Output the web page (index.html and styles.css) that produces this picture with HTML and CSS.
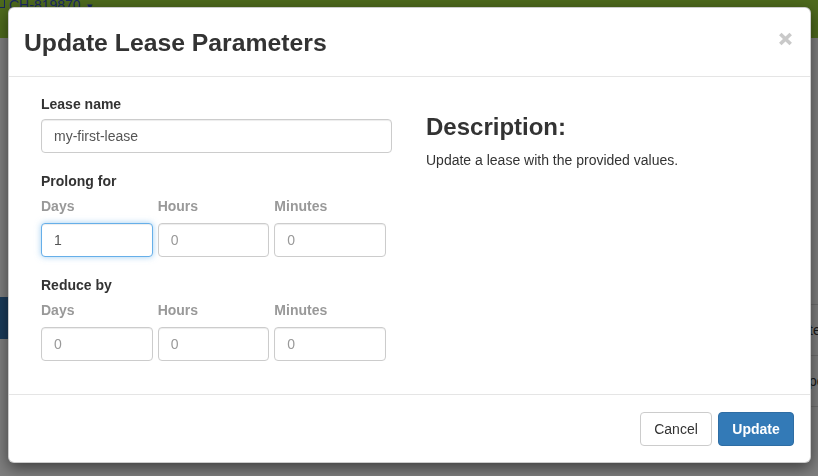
FILE: index.html
```html
<!DOCTYPE html>
<html lang="en">
<head>
<meta charset="utf-8">
<title>Update Lease Parameters</title>
<link rel="stylesheet" href="styles.css">
</head>
<body>
<div class="page">
  <nav class="topbar">
    <span class="brand-icon"></span>
    <span class="project">CH-819870 <span class="caret">&#9662;</span></span>
  </nav>
  <div class="main">
    <aside class="sidebar">
      <div class="side-item active"></div>
    </aside>
    <section class="content">
      <div class="toolbar">
        <button class="page-btn">Create Lease</button>
      </div>
      <div class="table">
        <div class="row"><div class="cell-wide"></div><div class="cell">test</div></div>
        <div class="row"><div class="cell-wide"></div><div class="cell">pending</div></div>
      </div>
    </section>
  </div>
</div>

<div class="backdrop"></div>

<div class="modal">
  <div class="modal-header">
    <h3 class="modal-title">Update Lease Parameters</h3>
    <button class="close" aria-label="Close">
      <svg width="15" height="14" viewBox="0 0 15 14"><path d="M2.3 2 L12.7 12 M12.7 2 L2.3 12" stroke="#c9c9c9" stroke-width="3.6" stroke-linecap="butt"/></svg>
    </button>
  </div>
  <div class="modal-body">
    <div class="form-col">
      <div class="form-group">
        <label class="label">Lease name</label>
        <input class="input" type="text" value="my-first-lease">
      </div>
      <div class="form-group">
        <label class="label">Prolong for</label>
        <div class="time-grid">
          <div class="time-field">
            <span class="sub-label">Days</span>
            <input class="input focused" type="text" value="1">
          </div>
          <div class="time-field">
            <span class="sub-label">Hours</span>
            <input class="input" type="text" placeholder="0">
          </div>
          <div class="time-field">
            <span class="sub-label">Minutes</span>
            <input class="input" type="text" placeholder="0">
          </div>
        </div>
      </div>
      <div class="form-group last">
        <label class="label">Reduce by</label>
        <div class="time-grid">
          <div class="time-field">
            <span class="sub-label">Days</span>
            <input class="input" type="text" placeholder="0">
          </div>
          <div class="time-field">
            <span class="sub-label">Hours</span>
            <input class="input" type="text" placeholder="0">
          </div>
          <div class="time-field">
            <span class="sub-label">Minutes</span>
            <input class="input" type="text" placeholder="0">
          </div>
        </div>
      </div>
    </div>
    <div class="desc-col">
      <h3 class="desc-title">Description:</h3>
      <p class="desc-text">Update a lease with the provided values.</p>
    </div>
  </div>
  <div class="modal-footer">
    <button class="btn btn-default">Cancel</button>
    <button class="btn btn-primary">Update</button>
  </div>
</div>
</body>
</html>
```
FILE: styles.css
```css
* { box-sizing: border-box; }

html, body {
  margin: 0;
  height: 100%;
  overflow: hidden;
}

body {
  font-family: "Liberation Sans", Arial, sans-serif;
  font-size: 14px;
  line-height: 20px;
  color: #333;
  background: #fff;
}

/* ---------- page underneath ---------- */
.page {
  width: 900px;
  height: 476px;
}

.topbar {
  height: 38px;
  background: #9cd43a;
  display: flex;
  align-items: flex-start;
  gap: 4px;
}

.brand-icon {
  width: 5px;
  height: 10px;
  margin-top: -2px;
  border: 1px solid #2f4fb4;
  border-left: none;
}

.project {
  color: #3552c4;
  font-size: 14px;
  line-height: 14px;
  margin-top: -2px;
}

.caret {
  font-size: 11px;
  margin-left: 2px;
}

.main {
  display: flex;
  height: 438px;
}

.sidebar {
  width: 180px;
  background: #fff;
  padding-top: 259px;
}

.side-item {
  height: 42px;
}

.side-item.active { background: #3777b5; }

.content {
  flex: 1;
  background: #fff;
}

.toolbar {
  display: flex;
  justify-content: flex-end;
  padding-top: 160px;
}

.page-btn {
  height: 34px;
  width: 100px;
  margin-right: -18px;
  border: 1px solid #2e6da4;
  background: #337ab7;
  color: #fff;
  font: inherit;
  text-align: left;
  padding-left: 8px;
  letter-spacing: 1.2px;
}

.table {
  margin-top: 72px;
  border-top: 1px solid #ddd;
}

.row {
  display: flex;
  height: 51px;
  border-bottom: 1px solid #ddd;
  align-items: center;
}

.cell-wide { width: 629px; }

.cell { color: #333; }

/* ---------- backdrop ---------- */
.backdrop {
  position: fixed;
  inset: 0;
  background: rgba(0, 0, 0, 0.5);
}

/* ---------- modal ---------- */
.modal {
  position: absolute;
  left: 8px;
  top: 7px;
  width: 803px;
  background: #fff;
  border: 1px solid rgba(0, 0, 0, 0.2);
  border-radius: 6px;
  box-shadow: 0 5px 15px rgba(0, 0, 0, 0.5);
}

.modal-header {
  display: flex;
  justify-content: space-between;
  align-items: flex-start;
  padding: 21px 17px 19px 15px;
  border-bottom: 1px solid #e5e5e5;
}

.modal-title {
  margin: 0;
  font-size: 24.75px;
  line-height: 28px;
  font-weight: bold;
  color: #333;
}

.close {
  border: 0;
  background: none;
  padding: 0;
  margin-top: 3px;
  line-height: 0;
  cursor: pointer;
}

.modal-body {
  display: grid;
  grid-template-columns: 351px 1fr;
  column-gap: 34px;
  padding: 17px 15px 33px 32px;
}

.form-group { margin-bottom: 18px; }
.form-group.last { margin-bottom: 0; }

.label {
  display: block;
  font-weight: bold;
  margin-bottom: 5px;
}

.sub-label {
  display: block;
  font-weight: bold;
  color: #999;
  margin-bottom: 7px;
}

.input {
  display: block;
  width: 100%;
  height: 34px;
  padding: 6px 12px;
  font: inherit;
  color: #555;
  background: #fff;
  border: 1px solid #ccc;
  border-radius: 4px;
  box-shadow: inset 0 1px 1px rgba(0, 0, 0, 0.075);
  outline: none;
}

.input::placeholder { color: #999; }

.input.focused {
  border-color: #66afe9;
  box-shadow: inset 0 1px 1px rgba(0, 0, 0, 0.075), 0 0 6px rgba(102, 175, 233, 0.6);
}

.time-grid {
  width: 345px;
  display: grid;
  grid-template-columns: repeat(3, 1fr);
  column-gap: 5px;
}

.desc-title {
  margin: 20px 0 10px;
  font-size: 24px;
  line-height: 26.4px;
  font-weight: bold;
  color: #333;
}

.desc-text { margin: 0; }

.modal-footer {
  display: flex;
  justify-content: flex-end;
  gap: 6px;
  padding: 17px 16px 16px;
  border-top: 1px solid #e5e5e5;
}

.btn {
  height: 34px;
  font: inherit;
  border-radius: 4px;
  border: 1px solid transparent;
  cursor: pointer;
}

.btn-default {
  width: 72px;
  background: #fff;
  color: #333;
  border-color: #ccc;
}

.btn-primary {
  width: 76px;
  background: #337ab7;
  border-color: #2e6da4;
  color: #fff;
  font-weight: bold;
}
```
